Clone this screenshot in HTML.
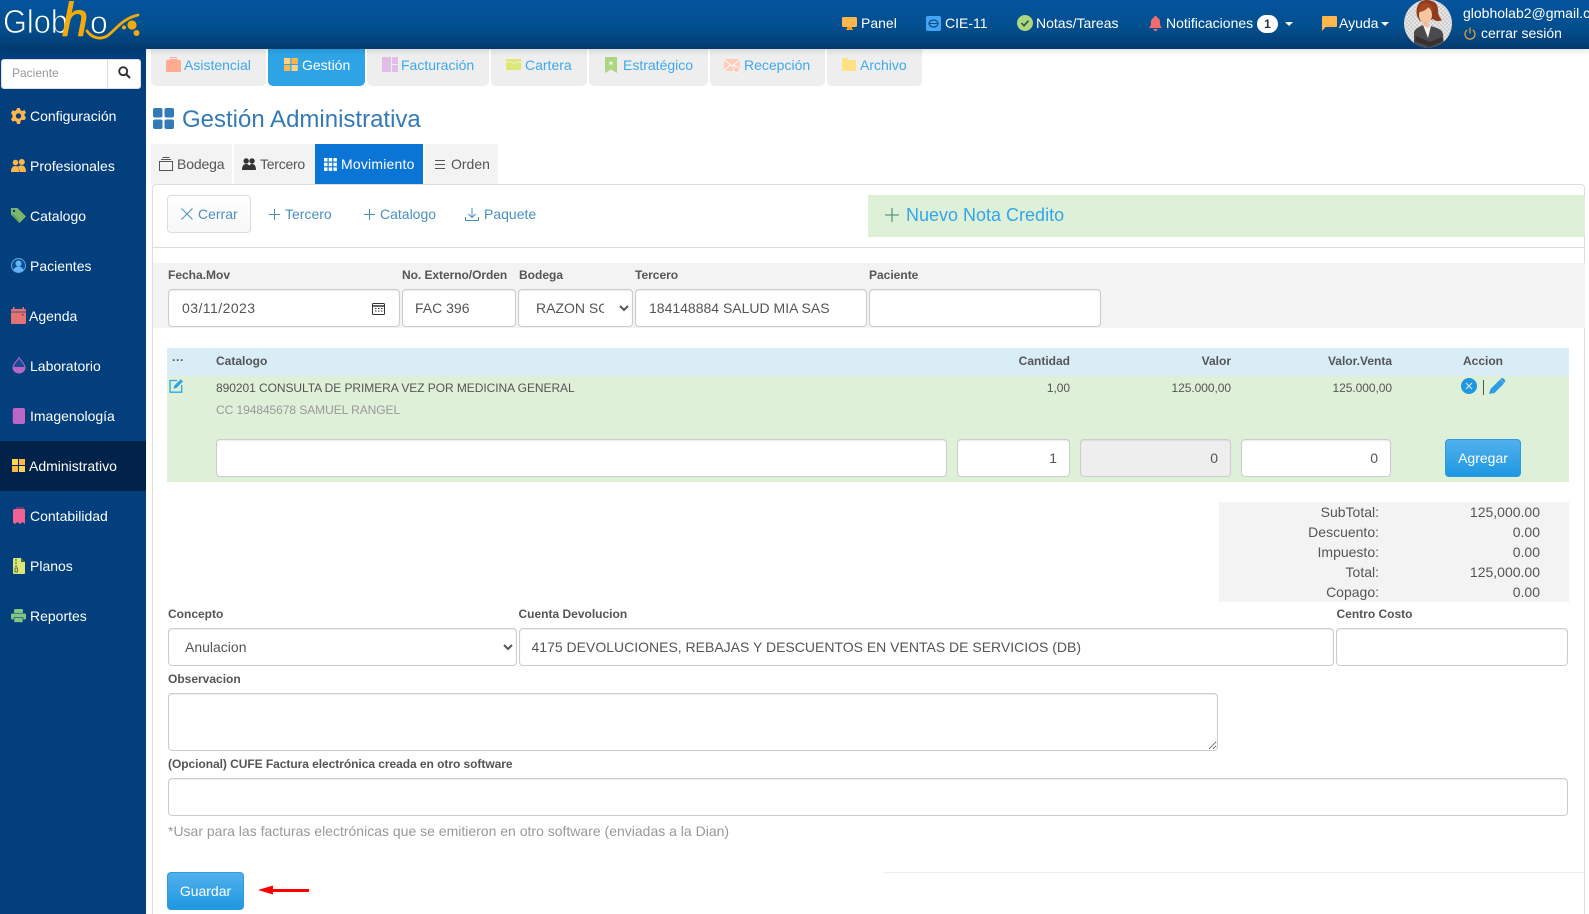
<!DOCTYPE html>
<html lang="es">
<head>
<meta charset="utf-8">
<title>Gestión Administrativa</title>
<style>
*{box-sizing:border-box}
html,body{margin:0;padding:0;width:1589px;height:914px;overflow:hidden;background:#fff;font-family:"Liberation Sans",Arial,sans-serif;font-size:14px;color:#555}
.a{position:absolute}
.t{position:absolute;line-height:20px;white-space:nowrap}
svg{position:absolute;display:block;overflow:visible}
#hdr{left:0;top:0;width:1589px;height:49px;background:linear-gradient(#03539e 0,#03508f 55%,#033a6f 100%);box-shadow:0 2px 6px rgba(0,0,0,.12);z-index:3}
#hdr .t{color:#fff}
#side{left:0;top:49px;width:146px;height:865px;background:#023f7c}
.w{color:#fff}
.tab{position:absolute;top:49px;height:37px;background:#eee;border-radius:0 0 5px 5px}
.tl{color:#3da9ea}
.sub{position:absolute;top:144px;height:40px;background:#f3f3f3}
.bl{color:#4a90bf}
label,.lb{position:absolute;font-weight:bold;font-size:12px;line-height:16px;color:#555;white-space:nowrap}
input,select,textarea{position:absolute;font-family:"Liberation Sans",Arial,sans-serif;font-size:14px;color:#555;background:#fff;border:1px solid #ccc;border-radius:4px;box-shadow:inset 0 1px 1px rgba(0,0,0,.075);padding:6px 12px;outline:none;margin:0}
input.r{text-align:right}
.btn{position:absolute;background:linear-gradient(#52b0ec,#1e98e2);border:1px solid #2a9be0;border-radius:4px;color:#fff;font-size:14px;text-align:center;line-height:36px}
.th{position:absolute;font-weight:bold;font-size:12px;line-height:16px;color:#555;white-space:nowrap}
.td{position:absolute;font-size:12px;line-height:16px;color:#555;white-space:nowrap;letter-spacing:-.06px}
.rr{text-align:right}
</style>
</head>
<body>

<!-- HEADER -->
<div id="hdr" class="a">
  <svg style="left:0;top:0" width="146" height="49" viewBox="0 0 146 49">
    <text x="3" y="33" font-family="Liberation Sans" font-size="33" textLength="65" lengthAdjust="spacingAndGlyphs" fill="#fff" stroke="#03508f" stroke-width=".8">Glob</text>
    <text x="62" y="36" font-family="Liberation Sans" font-size="47" font-style="italic" fill="#f3aa0c" stroke="#f3aa0c" stroke-width=".9">h</text>
    <text x="90" y="33.500" font-family="Liberation Sans" font-size="32" fill="#fff" stroke="#03508f" stroke-width=".8">o</text>
    <path d="M87 31C92 38 100 40 107 36C115 31 121 19 138 15" fill="none" stroke="#f3aa0c" stroke-width="2.8" stroke-linecap="round"/>
    <circle cx="132" cy="25" r="4.6" fill="#f3aa0c"/><circle cx="136.500" cy="33" r="3" fill="#f3aa0c"/><circle cx="124" cy="27.500" r="2" fill="#f3aa0c"/>
  </svg>

  <svg style="left:842px;top:17px" width="15" height="13" viewBox="0 0 15 13"><rect width="15" height="10" rx="1.500" fill="#ffb74d"/><rect x="5" y="10" width="5" height="2" fill="#f59a23"/><rect x="4" y="12" width="7" height="1" fill="#f59a23"/></svg>
  <div class="t" style="left:861px;top:13px">Panel</div>

  <svg style="left:926px;top:16px" width="15" height="15" viewBox="0 0 15 15"><rect width="15" height="15" rx="2" fill="#42a5f5"/><ellipse cx="7.500" cy="7.500" rx="4.500" ry="3.500" fill="none" stroke="#0d4d86" stroke-width="1.200"/><path d="M3.500 7.500h8" stroke="#0d4d86"/></svg>
  <div class="t" style="left:945px;top:13px">CIE-11</div>

  <svg style="left:1017px;top:15px" width="16" height="16" viewBox="0 0 16 16"><circle cx="8" cy="8" r="8" fill="#aed581"/><path d="M4.500 8l2.500 2.700 4.500-5" fill="none" stroke="#1d5c3a" stroke-width="1.600"/></svg>
  <div class="t" style="left:1036px;top:13px">Notas/Tareas</div>

  <svg style="left:1149px;top:16px" width="13" height="15" viewBox="0 0 13 15"><path d="M6.500 0C8 0 8 1.200 8 1.500c2 .7 3 2.400 3 4.500 0 3 .6 4.500 2 6H0c1.400-1.500 2-3 2-6 0-2.100 1-3.800 3-4.500C5 1.200 5 0 6.500 0z" fill="#ef6c6c"/><path d="M4.500 13h4c0 1.200-1 2-2 2s-2-.8-2-2z" fill="#ef6c6c"/></svg>
  <div class="t" style="left:1166px;top:13px">Notificaciones</div>
  <div class="a" style="left:1257px;top:15px;width:21px;height:18px;border-radius:9px;background:#fff;color:#333;font-weight:bold;font-size:12px;line-height:18px;text-align:center">1</div>
  <div class="a" style="left:1285px;top:22px;width:0;height:0;border-left:4px solid transparent;border-right:4px solid transparent;border-top:4px solid #fff"></div>

  <svg style="left:1322px;top:16px" width="15" height="15" viewBox="0 0 15 15"><path d="M1 0h13a1 1 0 0 1 1 1v9a1 1 0 0 1-1 1H3.500L0 15V1a1 1 0 0 1 1-1z" fill="#ffb74d"/></svg>
  <div class="t" style="left:1339px;top:13px">Ayuda</div>
  <div class="a" style="left:1381px;top:22px;width:0;height:0;border-left:4px solid transparent;border-right:4px solid transparent;border-top:4px solid #fff"></div>

  <svg style="left:1404px;top:0" width="48" height="48" viewBox="0 0 48 48">
    <defs>
      <clipPath id="cp"><circle cx="24" cy="23.500" r="24"/></clipPath>
      <pattern id="ch" width="4" height="4" patternUnits="userSpaceOnUse"><rect width="4" height="4" fill="#e4e4e4"/><rect width="2" height="2" fill="#cfcfcf"/><rect x="2" y="2" width="2" height="2" fill="#cfcfcf"/></pattern>
    </defs>
    <circle cx="24" cy="23.500" r="24" fill="url(#ch)"/>
    <g clip-path="url(#cp)">
      <path d="M13 16C11 6 16 0 22 0c7 0 12 3 12 10 0 5 2 8 4 10-4 2-7 1-9-1-3 2-9 4-13 2-1-1-2-3-3-5z" fill="#8e3b1e"/>
      <ellipse cx="21.500" cy="15" rx="6.500" ry="8.500" fill="#f4c7a1"/>
      <path d="M15 12c3 0 8-2 10-6 1 3 3 5 4 6 0-5-2-9-7-9s-8 4-7 9z" fill="#a64822"/>
      <rect x="19.500" y="21" width="5" height="6" fill="#f0bd96"/>
      <path d="M10 48V33c0-4 5-6 9-8l5 6 3-5c6 2 11 3 12 8l1 14z" fill="#4a494d"/>
      <path d="M19 25l5 13 3-12-3 2z" fill="#f6efe8"/>
      <path d="M12 36l14 6 12-5 1 4-13 6-15-6z" fill="#37302e"/>
    </g>
  </svg>

  <div class="t" style="left:1463px;top:3px">globholab2@gmail.com</div>
  <svg style="left:1464px;top:27px" width="12" height="13" viewBox="0 0 12 13"><path d="M3.200 3A5 5 0 1 0 8.800 3" fill="none" stroke="#e8a33d" stroke-width="1.200"/><path d="M6 .5v6" stroke="#e8a33d" stroke-width="1.200"/></svg>
  <div class="t" style="left:1481px;top:23px">cerrar sesión</div>
</div>

<!-- SIDEBAR -->
<div id="side" class="a"></div>
<div class="a" style="left:1px;top:59px;width:140px;height:30px;background:#fff;border-radius:3px;border:1px solid #ddd"></div>
<div class="a" style="left:107px;top:60px;width:1px;height:28px;background:#ddd"></div>
<div class="t" style="left:12px;top:63px;font-size:12px;color:#999">Paciente</div>
<svg style="left:118px;top:66px" width="13" height="13" viewBox="0 0 13 13"><circle cx="5.200" cy="5.200" r="4" fill="none" stroke="#333" stroke-width="1.900"/><path d="M8.200 8.200l3.800 3.800" stroke="#333" stroke-width="2.200"/></svg>

<div class="a" style="left:0;top:441px;width:146px;height:50px;background:#01234a"></div>

<svg style="left:11px;top:108px" width="15" height="16" viewBox="0 0 15 16"><path d="M6 0h3l.5 2.300 1.800.8L13.300 2l1.700 2.500-1.600 1.700.2 1.800 1.400 1.600-1.500 2.700-2.300-.6-1.500 1.100L9 16H6l-.6-2.200-1.600-1-2.200.8L0 11l1.500-1.800V7.300L0 5l1.600-2.700 2.200.7 1.600-1z" fill="#ffb74d"/><circle cx="7.500" cy="8" r="2.700" fill="#023f7c"/></svg>
<div class="t w" style="left:30px;top:106px">Configuración</div>

<svg style="left:11px;top:159px" width="15" height="13" viewBox="0 0 15 13"><circle cx="4.500" cy="3.500" r="2.800" fill="#ffb74d"/><circle cx="10.800" cy="3" r="3" fill="#ffb74d"/><path d="M0 13c0-4 1.500-6 4.500-6S8 9 8 13zM8.500 13c0-2-.5-4-1.500-5.500C8 6.500 9 6.500 10.800 6.500 13.500 6.500 15 9 15 13z" fill="#ffb74d"/></svg>
<div class="t w" style="left:30px;top:156px">Profesionales</div>

<svg style="left:11px;top:208px" width="15" height="15" viewBox="0 0 15 15"><path d="M0 0h6.500L15 8.500 8.500 15 0 6.500z" fill="#7cb66b"/><circle cx="3" cy="3" r="1.200" fill="#023f7c"/><path d="M1.500 6.200L8 12.600" stroke="#4a8a55" stroke-width=".7"/></svg>
<div class="t w" style="left:30px;top:206px">Catalogo</div>

<svg style="left:11px;top:258px" width="15" height="15" viewBox="0 0 15 15"><circle cx="7.500" cy="7.500" r="7" fill="#0f4f90" stroke="#5aa9ef"/><circle cx="7.500" cy="5.500" r="3" fill="#64b5f6"/><path d="M2.500 12c1-2.500 2.800-3.500 5-3.500s4 1 5 3.500a7 7 0 0 1-10 0z" fill="#64b5f6"/></svg>
<div class="t w" style="left:30px;top:256px">Pacientes</div>

<svg style="left:11px;top:307px" width="15" height="17" viewBox="0 0 15 17"><rect y="2" width="15" height="15" rx="1" fill="#e57373"/><rect x="2" width="1.500" height="3" fill="#e57373"/><rect x="11.500" width="1.500" height="3" fill="#e57373"/><path d="M0 5h15" stroke="#023f7c" stroke-width=".7"/><rect x="11" y="7" width="1.500" height="1.500" fill="#7a2f3a"/></svg>
<div class="t w" style="left:29px;top:306px">Agenda</div>

<svg style="left:13px;top:357px" width="12" height="16" viewBox="0 0 12 16"><path d="M6 .5C7 3 12 6.500 12 10.500a6 5.500 0 0 1-12 0C0 6.500 5 3 6 .5z" fill="#1d4a93" stroke="#ba68c8"/><path d="M0 10h12v.5a6 5.500 0 0 1-12 0z" fill="#ba68c8"/></svg>
<div class="t w" style="left:30px;top:356px">Laboratorio</div>

<div class="a" style="left:13px;top:408px;width:12px;height:16px;background:#ba68c8;border-radius:2px;box-shadow:-1px 0 0 #4a3aa0"></div>
<div class="t w" style="left:30px;top:406px">Imagenología</div>

<svg style="left:12px;top:459px" width="13" height="13" viewBox="0 0 13 13"><rect width="6" height="6" fill="#ffd54f"/><rect x="7" width="6" height="6" fill="#ffb74d"/><rect y="7" width="6" height="6" fill="#ffb74d"/><rect x="7" y="7" width="6" height="6" fill="#ffd54f"/></svg>
<div class="t w" style="left:29px;top:456px">Administrativo</div>

<svg style="left:13px;top:508px" width="12" height="16" viewBox="0 0 12 16"><path d="M2 1h9a1 1 0 0 1 1 1v14l-2.500-2L7 16l-2.500-2L2 16 0 14.500V3a2 2 0 0 1 2-2z" fill="#f06292"/><path d="M3 0h8" stroke="#c2426f"/></svg>
<div class="t w" style="left:30px;top:506px">Contabilidad</div>

<svg style="left:13px;top:558px" width="12" height="16" viewBox="0 0 12 16"><path d="M1 0h7l4 4v11a1 1 0 0 1-1 1H1a1 1 0 0 1-1-1V1a1 1 0 0 1 1-1z" fill="#dce775"/><path d="M3 1v2M3 4v2M3 7v2" stroke="#3c5a3a"/><rect x="2" y="10" width="2.500" height="4" fill="none" stroke="#3c5a3a" stroke-width=".8"/><path d="M8 0v4h4" fill="#2e6b3a"/></svg>
<div class="t w" style="left:30px;top:556px">Planos</div>

<svg style="left:11px;top:609px" width="15" height="14" viewBox="0 0 15 14"><rect x="3" width="9" height="4" rx="1" fill="#81c784"/><rect y="4.500" width="15" height="6" rx="1.500" fill="#81c784"/><rect x="3" y="8.500" width="9" height="5" fill="#81c784" stroke="#023f7c" stroke-width=".6"/></svg>
<div class="t w" style="left:30px;top:606px">Reportes</div>

<!-- TOP TABS -->
<div class="tab" style="left:151px;width:115px"></div>
<div class="tab" style="left:268px;width:97px;background:#2ea4e7"></div>
<div class="tab" style="left:367px;width:122px"></div>
<div class="tab" style="left:491px;width:96px"></div>
<div class="tab" style="left:589px;width:119px"></div>
<div class="tab" style="left:710px;width:115px"></div>
<div class="tab" style="left:827px;width:95px"></div>

<svg style="left:166px;top:57px" width="15" height="15" viewBox="0 0 15 15"><rect y="3" width="15" height="12" rx="1.500" fill="#ffab91"/><path d="M3 2.500h9M4 .5h7" stroke="#ffab91"/></svg>
<div class="t tl" style="left:184px;top:55px">Asistencial</div>
<svg style="left:284px;top:58px" width="14" height="13" viewBox="0 0 14 13"><rect width="6.300" height="6" fill="#ffd180"/><rect x="7.500" width="6.300" height="6" fill="#ffb74d"/><rect y="7" width="6.300" height="6" fill="#ffb74d"/><rect x="7.500" y="7" width="6.300" height="6" fill="#ffd180"/></svg>
<div class="t" style="left:302px;top:55px;color:#fff">Gestión</div>
<svg style="left:382px;top:57px" width="16" height="15" viewBox="0 0 16 15"><rect width="9" height="15" fill="#e1bee7"/><rect x="10" width="6" height="7" fill="#e1bee7"/><rect x="10" y="8" width="6" height="7" fill="#e1bee7"/></svg>
<div class="t tl" style="left:401px;top:55px">Facturación</div>
<svg style="left:506px;top:59px" width="15" height="11" viewBox="0 0 15 11"><rect width="15" height="11" fill="#dce775"/><path d="M0 3h5l2.500 2L10 3h5" fill="none" stroke="#f0f4c3"/></svg>
<div class="t tl" style="left:525px;top:55px">Cartera</div>
<svg style="left:605px;top:57px" width="12" height="16" viewBox="0 0 12 16"><path d="M0 0h12v16l-6-3.500L0 16z" fill="#aed581"/><path d="M6 3.500l.8 1.700 1.700.2-1.200 1.200.3 1.700-1.600-.9-1.600.9.300-1.700-1.200-1.200 1.700-.2z" fill="#eee"/></svg>
<div class="t tl" style="left:623px;top:55px">Estratégico</div>
<svg style="left:724px;top:59px" width="16" height="14" viewBox="0 0 16 14"><rect width="16" height="12" rx="1" fill="#ffccbc"/><path d="M0 1l8 6 8-6M0 12l6-6M16 12l-6-6" fill="none" stroke="#fff" stroke-width=".9"/><circle cx="12.500" cy="10.500" r="3" fill="#ffccbc" stroke="#fff" stroke-width=".7"/></svg>
<div class="t tl" style="left:744px;top:55px">Recepción</div>
<svg style="left:842px;top:58px" width="14" height="13" viewBox="0 0 14 13"><path d="M0 1a1 1 0 0 1 1-1h4l2 2h6a1 1 0 0 1 1 1v9a1 1 0 0 1-1 1H1a1 1 0 0 1-1-1z" fill="#ffe082"/></svg>
<div class="t tl" style="left:860px;top:55px">Archivo</div>

<!-- TITLE -->
<svg style="left:152.500px;top:108px" width="21" height="21" viewBox="0 0 21 21"><rect width="9.500" height="9.500" rx="2" fill="#337ab7"/><rect x="11.500" width="9.500" height="9.500" rx="2" fill="#337ab7"/><rect y="11.500" width="9.500" height="9.500" rx="2" fill="#337ab7"/><rect x="11.500" y="11.500" width="9.500" height="9.500" rx="2" fill="#337ab7"/></svg>
<div class="a" style="left:182px;top:106px;font-size:24px;line-height:28px;color:#337ab7;white-space:nowrap">Gestión Administrativa</div>

<!-- SUB TABS -->
<div class="sub" style="left:151px;width:81px"></div>
<div class="sub" style="left:234px;width:81px"></div>
<div class="sub" style="left:315px;width:108px;background:#0b75d5"></div>
<div class="sub" style="left:425px;width:73px"></div>

<svg style="left:159px;top:157px" width="14" height="14" viewBox="0 0 14 14" fill="none" stroke="#555"><rect x=".5" y="4.500" width="13" height="9"/><path d="M2 2.500h10M3.500 .5h7"/></svg>
<div class="t" style="left:177px;top:154px;letter-spacing:-.15px">Bodega</div>
<svg style="left:242px;top:158px" width="14" height="12" viewBox="0 0 14 12" fill="#333"><circle cx="4.200" cy="3" r="2.700"/><circle cx="10" cy="3" r="2.700"/><path d="M0 12c0-4 1.500-6 4.200-6 1.500 0 2.500.6 3 1.700C7.900 6.600 8.800 6 10 6c2.500 0 4 2 4 6z"/></svg>
<div class="t" style="left:260px;top:154px;letter-spacing:-.25px">Tercero</div>
<svg style="left:324px;top:158px" width="13" height="13" viewBox="0 0 13 13" fill="#fff"><rect width="3.500" height="3.500"/><rect x="4.700" width="3.500" height="3.500"/><rect x="9.400" width="3.500" height="3.500"/><rect y="4.700" width="3.500" height="3.500"/><rect x="4.700" y="4.700" width="3.500" height="3.500"/><rect x="9.400" y="4.700" width="3.500" height="3.500"/><rect y="9.400" width="3.500" height="3.500"/><rect x="4.700" y="9.400" width="3.500" height="3.500"/><rect x="9.400" y="9.400" width="3.500" height="3.500"/></svg>
<div class="t" style="left:341px;top:154px;color:#fff;letter-spacing:.2px">Movimiento</div>
<svg style="left:435px;top:160px" width="10" height="9" viewBox="0 0 10 9" stroke="#555"><path d="M0 .5h10M0 4.500h10M0 8.500h10"/></svg>
<div class="t" style="left:451px;top:154px">Orden</div>

<!-- PANEL -->
<div class="a" style="left:152px;top:184px;width:1433px;height:730px;border:1px solid #ddd;border-width:1px 1px 0 1px;border-radius:4px 4px 0 0"></div>
<div class="a" style="left:167px;top:195px;width:84px;height:38px;border:1px solid #ddd;border-radius:4px;background:linear-gradient(#fff,#f7f7f7)"></div>
<svg style="left:181px;top:208px" width="12" height="12" viewBox="0 0 12 12"><path d="M.5.500l11 11M11.500.500l-11 11" stroke="#4a90bf" stroke-width="1"/></svg>
<div class="t bl" style="left:198px;top:204px">Cerrar</div>
<svg style="left:269px;top:209px" width="11" height="11" viewBox="0 0 11 11"><path d="M5.500 0v11M0 5.500h11" stroke="#4a90bf"/></svg>
<div class="t bl" style="left:285px;top:204px">Tercero</div>
<svg style="left:364px;top:209px" width="11" height="11" viewBox="0 0 11 11"><path d="M5.500 0v11M0 5.500h11" stroke="#4a90bf"/></svg>
<div class="t bl" style="left:380px;top:204px">Catalogo</div>
<svg style="left:465px;top:208px" width="14" height="13" viewBox="0 0 14 13" fill="none" stroke="#4a90bf"><path d="M7 0v9M3.500 6L7 9.500 10.500 6M.5 9v3.500h13V9"/></svg>
<div class="t bl" style="left:484px;top:204px">Paquete</div>

<div class="a" style="left:868px;top:195px;width:717px;height:42px;background:#dff0d8"></div>
<svg style="left:885px;top:208px" width="14" height="14" viewBox="0 0 14 14"><path d="M7 0v14M0 7h14" stroke="#5a9a88" stroke-width="1.300"/></svg>
<div class="a" style="left:906px;top:204px;font-size:18px;line-height:22px;color:#33a5e8;white-space:nowrap">Nuevo Nota Credito</div>

<div class="a" style="left:153px;top:247px;width:1432px;height:1px;background:#ddd"></div>

<!-- FORM TOP -->
<div class="a" style="left:153px;top:263px;width:1432px;height:65px;background:#f3f3f3"></div>
<div class="lb" style="left:168px;top:267px">Fecha.Mov</div>
<div class="lb" style="left:402px;top:267px;letter-spacing:-.05px">No. Externo/Orden</div>
<div class="lb" style="left:519px;top:267px">Bodega</div>
<div class="lb" style="left:635px;top:267px">Tercero</div>
<div class="lb" style="left:869px;top:267px">Paciente</div>

<input style="left:168px;top:289px;width:232px;height:38px;padding-left:13px;letter-spacing:.45px" value="03/11/2023">
<svg style="left:372px;top:302px" width="13" height="13" viewBox="0 0 13 13" fill="none" stroke="#333"><rect x=".5" y="1.500" width="12" height="11" rx="1"/><path d="M.5 4h12" stroke-width="1.500"/><path d="M3 6.500h1.500M6 6.500h1.500M9 6.500h1.500M3 9h1.500M6 9h1.500M9 9h1.500"/></svg>
<input style="left:402px;top:289px;width:114px;height:38px" value="FAC 396">
<select style="left:518px;top:289px;width:115px;height:38px;padding-left:13px"><option>RAZON SOCIAL</option></select>
<input style="left:635px;top:289px;width:232px;height:38px;padding-left:13px" value="184148884 SALUD MIA SAS">
<input style="left:869px;top:289px;width:232px;height:38px">

<!-- TABLE -->
<div class="a" style="left:167px;top:348px;width:1402px;height:28px;background:#d9edf7"></div>
<div class="a" style="left:167px;top:375.500px;width:1402px;height:106px;background:#dff0d8"></div>

<div class="th" style="left:172px;top:352px">···</div>
<div class="th" style="left:216px;top:353px">Catalogo</div>
<div class="th rr" style="right:519px;top:353px">Cantidad</div>
<div class="th rr" style="right:358px;top:353px">Valor</div>
<div class="th rr" style="right:197px;top:353px">Valor.Venta</div>
<div class="th" style="left:1463px;top:353px">Accion</div>

<svg style="left:169px;top:378px" width="15" height="15" viewBox="0 0 15 15" fill="none"><path d="M8 2.500H1v11.700h11.700V7" stroke="#2ea4e7" stroke-width="1.300"/><path d="M4.500 10.800l.7-3L11.800 1.200l2.200 2.200-6.600 6.600z" fill="#2ea4e7"/></svg>

<div class="td" style="left:216px;top:380px">890201 CONSULTA DE PRIMERA VEZ POR MEDICINA GENERAL</div>
<div class="td" style="left:216px;top:402px;color:#999">CC 194845678 SAMUEL RANGEL</div>
<div class="td rr" style="right:519px;top:380px">1,00</div>
<div class="td rr" style="right:358px;top:380px">125.000,00</div>
<div class="td rr" style="right:197px;top:380px">125.000,00</div>

<svg style="left:1461px;top:378px" width="16" height="16" viewBox="0 0 16 16"><circle cx="8" cy="8" r="8" fill="#2196e3"/><path d="M5 5l6 6M11 5l-6 6" stroke="#cfe6f7" stroke-width="1.200"/></svg>
<div class="a" style="left:1483px;top:380px;width:1px;height:15px;background:#555"></div>
<svg style="left:1489px;top:378px" width="17" height="16" viewBox="0 0 17 16"><path d="M0 16l1.500-5L11 1.500l4 4L5.500 15z" fill="#2e9ce6"/><path d="M12 .5c1-1 2-.5 3 .5s1.800 2 .8 3L15 5 11.500 1.500z" fill="#2e9ce6"/></svg>

<input style="left:216px;top:439px;width:731px;height:38px">
<input class="r" style="left:957px;top:439px;width:113px;height:38px" value="1">
<input class="r" style="left:1080px;top:439px;width:151px;height:38px;background:#eee" value="0">
<input class="r" style="left:1241px;top:439px;width:150px;height:38px" value="0">
<div class="btn" style="left:1445px;top:439px;width:76px;height:38px">Agregar</div>

<!-- TOTALS -->
<div class="a" style="left:1219px;top:502px;width:350px;height:100px;background:#f3f3f3"></div>
<div class="t rr" style="right:210px;top:502px">SubTotal:</div><div class="t rr" style="right:49px;top:502px">125,000.00</div>
<div class="t rr" style="right:210px;top:522px">Descuento:</div><div class="t rr" style="right:49px;top:522px">0.00</div>
<div class="t rr" style="right:210px;top:542px">Impuesto:</div><div class="t rr" style="right:49px;top:542px">0.00</div>
<div class="t rr" style="right:210px;top:562px">Total:</div><div class="t rr" style="right:49px;top:562px">125,000.00</div>
<div class="t rr" style="right:210px;top:582px">Copago:</div><div class="t rr" style="right:49px;top:582px">0.00</div>

<!-- FORM BOTTOM -->
<div class="lb" style="left:168px;top:606px">Concepto</div>
<div class="lb" style="left:518.500px;top:606px">Cuenta Devolucion</div>
<div class="lb" style="left:1336.500px;top:606px">Centro Costo</div>
<select style="left:168px;top:628px;width:349px;height:38px"><option>Anulacion</option></select>
<input style="left:519px;top:628px;width:815px;height:38px;padding-left:11.500px" value="4175 DEVOLUCIONES, REBAJAS Y DESCUENTOS EN VENTAS DE SERVICIOS (DB)">
<input style="left:1336px;top:628px;width:232px;height:38px">

<div class="lb" style="left:168px;top:671px">Observacion</div>
<textarea style="left:168px;top:693px;width:1050px;height:58px"></textarea>

<div class="lb" style="left:168px;top:756px;letter-spacing:-.05px">(Opcional) CUFE Factura electrónica creada en otro software</div>
<input style="left:168px;top:778px;width:1400px;height:38px">

<div class="t" style="left:168px;top:821px;color:#999">*Usar para las facturas electrónicas que se emitieron en otro software (enviadas a la Dian)</div>

<div class="a" style="left:883px;top:872px;width:702px;height:1px;background:#eee"></div>

<div class="btn" style="left:167px;top:872px;width:77px;height:38px">Guardar</div>
<svg style="left:258px;top:884px" width="51" height="12" viewBox="0 0 51 12"><path d="M0 6L15 1.500V5H51V8H15V10.500z" fill="#f00"/></svg>

</body>
</html>
